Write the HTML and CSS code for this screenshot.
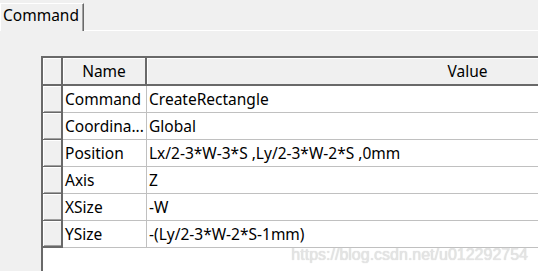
FILE: index.html
```html
<!DOCTYPE html>
<html lang="en">
<head>
    <meta charset="UTF-8">
    <title>Command Properties</title>
    <link rel="stylesheet" href="styles.css">
</head>
<body>
<div class="tabbar">
    <div class="tab">Command</div>
    <div class="tab-rest"></div>
</div>

<div class="panel">
    <div class="grid">
        <div class="row head">
            <div class="corner"></div>
            <div class="hcell name">Name</div>
            <div class="hcell value">Value</div>
        </div>
        <div class="row">
            <div class="rowhead"></div>
            <div class="cell name">Command</div>
            <div class="cell value">CreateRectangle</div>
        </div>
        <div class="row">
            <div class="rowhead"></div>
            <div class="cell name" title="Coordinate System">Coordina...</div>
            <div class="cell value">Global</div>
        </div>
        <div class="row">
            <div class="rowhead"></div>
            <div class="cell name">Position</div>
            <div class="cell value">Lx/2-3*W-3*S ,Ly/2-3*W-2*S ,0mm</div>
        </div>
        <div class="row">
            <div class="rowhead"></div>
            <div class="cell name">Axis</div>
            <div class="cell value">Z</div>
        </div>
        <div class="row">
            <div class="rowhead"></div>
            <div class="cell name">XSize</div>
            <div class="cell value">-W</div>
        </div>
        <div class="row">
            <div class="rowhead last"></div>
            <div class="cell name">YSize</div>
            <div class="cell value">-(Ly/2-3*W-2*S-1mm)</div>
        </div>
    </div>
</div>

<div class="watermark">https://blog.csdn.net/u012292754</div>
</body>
</html>
```

FILE: styles.css
```css
body {
    margin: 0;
    height: 271px;
    overflow: hidden;
    background-color: #f0f0f0;
    font-family: "Noto Sans", "Liberation Sans", sans-serif;
    font-size: 15.5px;
    color: #000;
    position: relative;
}

/* tab strip */
.tabbar {
    display: flex;
    align-items: flex-end;
    height: 31px;
}

.tab {
    box-sizing: border-box;
    width: 84px;
    height: 28px;
    padding-left: 2px;
    line-height: 22px;
    border-top: 1px solid #fff;
    border-left: 1px solid #fff;
    border-right: 1px solid #696969;
    box-shadow: inset -1px 0 #a0a0a0;
}

.tab-rest {
    flex: 1;
    border-bottom: 1px solid #fff;
}

/* property grid, wider than the window so clip it */
.panel {
    height: 240px;
    box-sizing: border-box;
    padding: 25px 0 0 41px;
    overflow: hidden;
}

.grid {
    width: 749px;
    height: 215px;
    box-sizing: border-box;
    border-left: 2px solid #696969;
    border-top: 2px solid #696969;
    background-color: #fff;
}

.row {
    display: flex;
    height: 27px;
    line-height: 26px;
}

.row.head {
    height: 28px;
}

.corner,
.hcell {
    box-sizing: border-box;
    background-color: #f0f0f0;
    border-right: 2px solid #696969;
    border-bottom: 2px solid #696969;
    box-shadow: inset 1px 1px #fff;
    text-align: center;
}

.corner,
.rowhead {
    width: 20px;
    flex-shrink: 0;
}

.rowhead {
    box-sizing: border-box;
    background-color: #f0f0f0;
    border-right: 2px solid #696969;
    border-bottom: 1px solid #696969;
    box-shadow: inset 1px 1px #fff, inset 0 -1px #a0a0a0;
}

.rowhead.last {
    border-bottom-width: 2px;
}

.cell {
    box-sizing: border-box;
    padding-left: 2px;
    border-bottom: 1px solid #c0c0c0;
    white-space: nowrap;
    overflow: hidden;
}

.name {
    width: 84px;
    flex-shrink: 0;
}

.cell.name {
    border-right: 1px solid #c0c0c0;
}

.value {
    width: 643px;
    flex-shrink: 0;
}

.watermark {
    position: absolute;
    right: 10px;
    bottom: 7px;
    font-family: "Liberation Sans", Arial, sans-serif;
    font-size: 16px;
    color: #e4e4e4;
    text-shadow: 0 0 1px #cfcfcf;
}
```
